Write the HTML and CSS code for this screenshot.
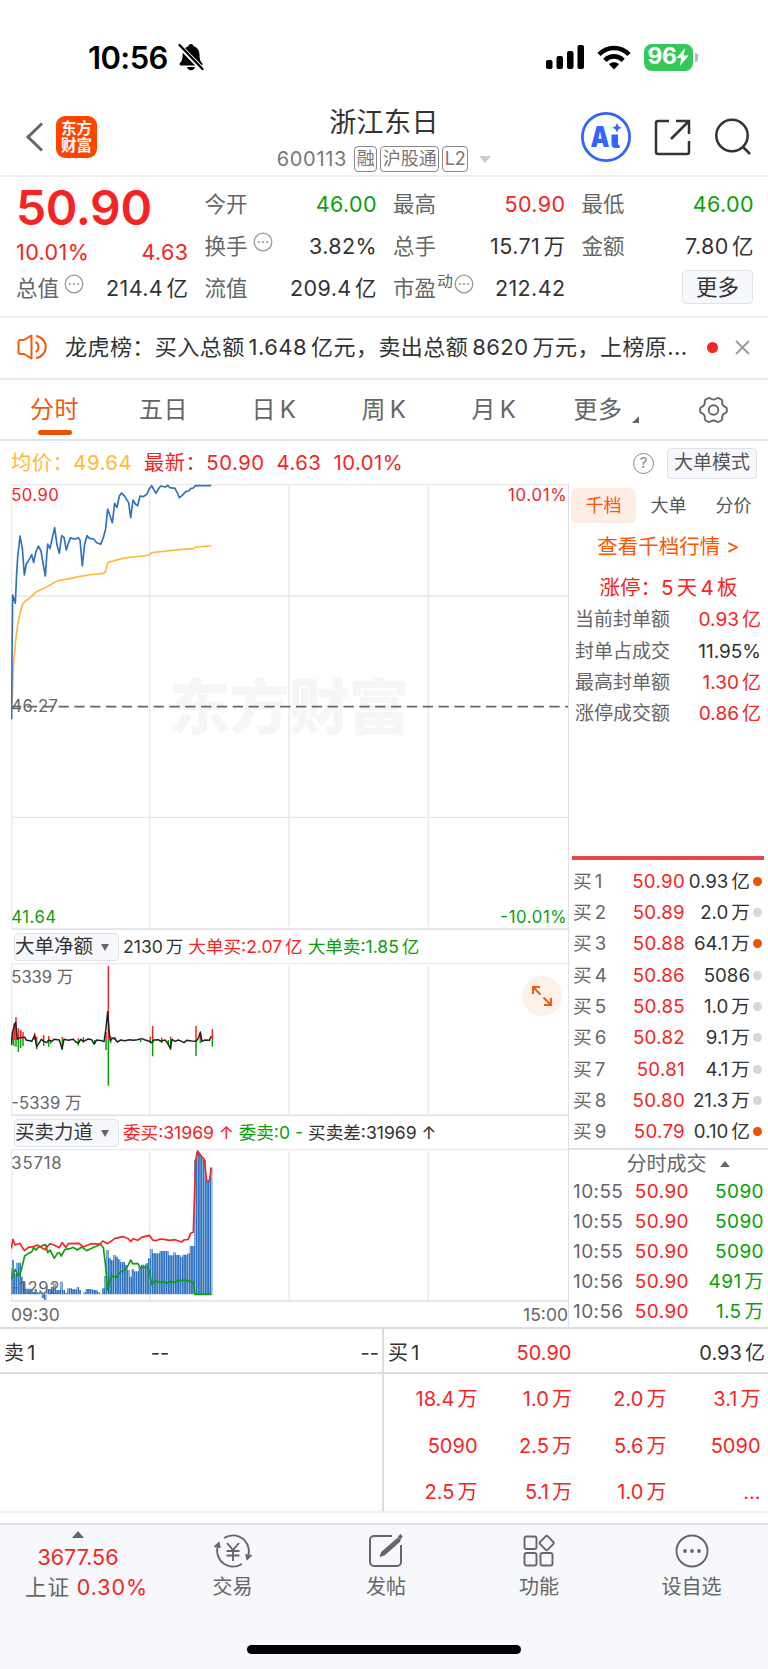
FILE: index.html
```html
<!DOCTYPE html>
<html lang="zh-CN">
<head>
  <meta charset="UTF-8">
  <meta name="viewport" content="width=device-width, initial-scale=1.0">
  <title>浙江东日 600113</title>
  <link rel="stylesheet" href="styles.css">
</head>
<body>
  <div class="status-bar">
    <span class="clock">10:56</span>
    <svg class="bell" width="26" height="28" viewBox="0 0 26 28">
      <path d="M13 1c1.500 0 2.500 1 2.600 2.200 4 1.200 5.900 4.600 5.900 8.300 0 5.500 1.200 7 2.800 8.800.8 1-.1 2.200-1.200 2.200H3c-1.200 0-1.900-1.200-1.200-2.200 1.700-1.900 2.800-3.300 2.800-8.800 0-3.700 1.900-7.100 5.800-8.300C10.500 2 11.500 1 13 1zM9 24h8c-.5 2-2 3.300-4 3.300S9.500 26 9 24z"/>
      <path d="M1 2.500l23.500 24" stroke="#fff" stroke-width="5"/>
      <path d="M1.500 2l23 24" stroke="#000" stroke-width="2.200" stroke-linecap="round"/>
    </svg>
    <svg class="signal" width="39" height="25" viewBox="0 0 39 25">
      <rect x="0" y="15" width="6.500" height="9" rx="2"/>
      <rect x="10.500" y="11" width="6.500" height="13" rx="2"/>
      <rect x="21" y="6" width="6.500" height="18" rx="2"/>
      <rect x="31.500" y="0" width="6.500" height="24" rx="2"/>
    </svg>
    <svg class="wifi" width="34" height="25" viewBox="0 0 34 25" fill="none" stroke="#000" stroke-width="4.600">
      <path d="M2 9.500C10.500 .8 23.500 .8 32 9.500"/>
      <path d="M7.800 15.300c5.300-5.200 13.100-5.200 18.400 0"/>
      <path d="M17 24.500l-5-5.200c3-2.600 7-2.600 10 0z" fill="#000" stroke="none"/>
    </svg>
    <div class="battery"><span>96</span><svg width="13" height="18" viewBox="0 0 13 18"><path d="M9 0L.5 10h4.700L3.800 18 12.600 7.500H7.700z" fill="#fff"/></svg></div>
    <i class="battery-tip"></i>
  </div>

  <div class="header">
    <div class="header-left">
      <svg width="20" height="30" viewBox="0 0 20 30" fill="none" stroke="#666" stroke-width="3"><path d="M17 1.500L3 15l14 13.500"/></svg>
      <div class="logo">东方<br>财富</div>
    </div>
    <div class="header-title">
      <div class="name">浙江东日</div>
      <div class="code">
        <span class="num">600113</span>
        <span class="tag">融</span><span class="tag">沪股通</span><span class="tag">L2</span>
        <i class="caret"></i>
      </div>
    </div>
    <div class="header-right">
      <svg width="50" height="50" viewBox="0 0 50 50">
        <circle cx="25" cy="25" r="23.600" fill="none" stroke="#3464ff" stroke-width="2.800"/>
        <text class="ai-text" x="9.500" y="35" textLength="19" lengthAdjust="spacingAndGlyphs">A</text>
        <path d="M30.500 22.500h6.500V31c0 1.700.3 2 1.700 2.200V36h-4c-3 0-4.200-1.500-4.200-4.300z" fill="#3464ff"/>
        <path d="M36 11l1.500 3.200 3.200 1.500-3.200 1.500L36 20.400l-1.500-3.200-3.200-1.500 3.200-1.500z" fill="#3464ff"/>
      </svg>
      <svg width="37" height="37" viewBox="0 0 37 37" fill="none" stroke="#333" stroke-width="2.500">
        <path d="M15 2H4a2 2 0 0 0-2 2v29a2 2 0 0 0 2 2h29a2 2 0 0 0 2-2V22"/>
        <path d="M22 2h13v13M35 2L17 20"/>
      </svg>
      <svg width="38" height="38" viewBox="0 0 38 38" fill="none" stroke="#333" stroke-width="2.500">
        <circle cx="18" cy="17.500" r="15.700"/><path d="M29 29l7 7"/>
      </svg>
    </div>
  </div>

  <div class="quote">
    <div class="quote-main">
      <div class="price red">50.90</div>
      <div class="cell red"><span>10.01%</span><span>4.63</span></div>
      <div class="cell"><label>总值<svg class="dots"><use href="#dots"/></svg></label><span>214.4<u>亿</u></span></div>
    </div>
    <div class="quote-col">
      <div class="cell"><label>今开</label><span class="green">46.00</span></div>
      <div class="cell"><label>换手<svg class="dots"><use href="#dots"/></svg></label><span>3.82%</span></div>
      <div class="cell"><label>流值</label><span>209.4<u>亿</u></span></div>
    </div>
    <div class="quote-col">
      <div class="cell"><label>最高</label><span class="red">50.90</span></div>
      <div class="cell"><label>总手</label><span>15.71<u>万</u></span></div>
      <div class="cell"><label>市盈<small>动</small><svg class="dots tight"><use href="#dots"/></svg></label><span>212.42</span></div>
    </div>
    <div class="quote-col">
      <div class="cell"><label>最低</label><span class="green">46.00</span></div>
      <div class="cell"><label>金额</label><span>7.80<u>亿</u></span></div>
      <div class="cell right"><div class="more-btn">更多</div></div>
    </div>
  </div>

  <div class="news">
    <svg width="31" height="26" viewBox="0 0 31 26" fill="none" stroke="#f25a0c" stroke-width="2">
      <path d="M14.500 1.500v23L7 20H3.500A2 2 0 0 1 1.500 18V8a2 2 0 0 1 2-2H7z" stroke-linejoin="round"/>
      <path d="M18.500 8c4 1.500 4 8.500 0 10M19 2c13 2 13 20 0 22"/>
    </svg>
    <div class="news-text">龙虎榜：买入总额<b>1.648</b>亿元，卖出总额<b>8620</b>万元，上榜原...</div>
    <i class="red-dot"></i>
    <svg width="15" height="15" viewBox="0 0 15 15" stroke="#999" stroke-width="1.800"><path d="M1 1l13 13M14 1L1 14"/></svg>
  </div>

  <div class="tabs">
    <div class="tab active">分时</div>
    <div class="tab">五日</div>
    <div class="tab">日<u>K</u></div>
    <div class="tab">周<u>K</u></div>
    <div class="tab">月<u>K</u></div>
    <div class="tab more">更多<i class="corner"></i></div>
    <div class="tab">
      <svg width="29" height="28" viewBox="0 0 29 28" fill="none" stroke="#666" stroke-width="1.900">
        <path d="M9 2.200C11 1 11.500 3.500 14.500 3.500S18 1 20 2.200l2.600 1.600c1.500 1.400-.2 3 1.200 5.200s4 1.500 4 3.500v3c0 2-2.600 1.300-4 3.500s.3 3.800-1.200 5.200L20 25.800c-2 1.200-2.500-1.300-5.500-1.300S11 27 9 25.800l-2.600-1.600c-1.500-1.400.2-3-1.200-5.200s-4-1.500-4-3.500v-3c0-2 2.600-1.300 4-3.500S4.900 5.200 6.400 3.800z"/>
        <circle cx="14.500" cy="14" r="4.800"/>
      </svg>
    </div>
  </div>

  <div class="legend">
    <span class="avg">均价：49.64</span>
    <span class="red">最新：50.90</span>
    <span class="red">4.63</span>
    <span class="red">10.01%</span>
    <i class="help">?</i>
    <div class="mode-btn">大单模式</div>
  </div>

  <div class="main">
    <div class="charts">
      <svg class="chart price-chart" viewBox="33 42 1671 1338">
        <path class="grid" d="M449 46V1370M867 46V1370M1285 46V1370M33 378H1704M33 1042H1704"/>
        <path class="frame" d="M35 1376V44H1704"/>
        <path class="frame-bottom" d="M33 1377H1704"/>
        <text class="watermark" x="508" y="776" textLength="720">东方财富</text>
        <path class="zero" d="M33 710H1704"/>
        <polyline class="avg-line" points="36,700 40,590 46,520 53,465 60,430 67,405 75,394 92,382 107,367 120,360 135,353 150,345 165,336 180,331 210,326 240,319 265,315 310,310 317,304 323,278 345,271 370,265 395,261 430,258 448,255 455,248 500,243 540,239 580,236 588,231 634,228"/>
        <polyline class="price-line" points="35,748 36,560 38,375 42,388 46,400 50,310 53,262 60,198 67,235 73,315 79,282 88,268 95,254 101,278 107,248 115,228 123,243 130,285 136,318 140,260 143,222 150,236 157,203 164,173 171,225 178,250 185,197 192,202 199,240 205,220 212,203 219,206 227,207 234,203 240,210 247,288 254,222 261,197 268,205 281,207 290,218 302,223 310,203 317,176 323,117 330,137 337,158 344,100 351,113 358,78 365,69 374,79 386,98 392,143 399,90 406,102 413,107 420,78 430,80 441,72 448,56 455,47 462,60 468,70 475,57 482,48 496,51 503,46 510,53 525,55 532,69 538,83 546,77 558,64 566,63 573,55 580,54 586,47 634,47"/>
        <text class="c-red" x="34" y="93" textLength="142">50.90</text>
        <text class="c-red" x="1524" y="93" textLength="176">10.01%</text>
        <text x="34" y="725" textLength="140">46.27</text>
        <text class="c-green" x="34" y="1358" textLength="134">41.64</text>
        <text class="c-green" x="1501" y="1358" textLength="199">-10.01%</text>
      </svg>

      <div class="sub-head">
        <div class="select">大单净额<i></i></div>
        <span>2130<u>万</u></span>
        <span class="red">大单买:2.07<u>亿</u></span>
        <span class="green">大单卖:1.85<u>亿</u></span>
      </div>
      <div class="chart-wrap">
        <svg class="chart sub-chart" viewBox="33 189 1671 459">
          <path class="grid" d="M449 198V643M867 198V643M1285 198V643"/>
          <path class="frame" d="M35 646V191H1704"/>
          <path class="frame-bottom" d="M33 646H1704"/>
          <path class="bar-red" d="M38 420V395M43 420V370M48 420V352M55 420V385M62 420V390M69 420V396M104 420V398M110 420V410M131 420V405M146 420V408M187 420V411M235 420V415M250 420V412M318 420V395M325 420V198M332 420V408M345 420V410M451 420V410M458 420V378M485 420V413M512 420V410M588 420V378M601 420V400M637 420V388"/>
          <path class="bar-green" d="M35 420V434M41 420V438M48 420V440M55 420V456M62 420V444M69 420V438M110 420V448M131 420V438M146 420V440M152 420V431M187 420V450M235 420V437M250 420V428M284 420V433M318 420V450M325 420V557M332 420V430M422 420V427M451 420V430M458 420V469M485 420V430M505 420V436M512 420V450M588 420V468M601 420V430M637 420V440"/>
          <polyline class="net-line" points="34,435 37,400 43,375 47,367 52,418 58,413 75,412 78,420 95,424 104,406 110,440 118,428 124,418 132,424 140,428 146,420 155,424 162,418 178,420 186,446 192,418 205,421 220,418 228,426 235,430 242,418 250,424 265,417 275,419 282,432 290,420 305,422 312,425 318,385 323,335 328,400 331,422 338,414 345,417 352,426 362,420 375,422 388,419 400,421 412,419 425,416 436,420 448,424 455,428 462,420 475,419 482,424 495,420 502,428 511,445 516,418 525,424 535,420 545,424 552,428 560,421 575,423 588,424 595,415 601,396 606,424 615,420 628,421 634,408"/>
          <text x="34" y="249" textLength="186">5339 万</text>
          <text x="34" y="626" textLength="211">-5339 万</text>
        </svg>
        <div class="expand">
          <svg width="22" height="22" viewBox="0 0 22 22" fill="none" stroke="#f25a0c" stroke-width="2">
            <path d="M2 9V2h7M2 2l7.500 7.500M20 13v7h-7M20 20l-7.500-7.500"/>
          </svg>
        </div>
      </div>

      <div class="sub-head">
        <div class="select">买卖力道<i></i></div>
        <span class="red">委买:31969 ↑</span>
        <span class="green">委卖:0 -</span>
        <span>买卖差:31969 ↑</span>
      </div>
      <svg class="chart sub-chart" viewBox="33 117 1671 459">
        <defs>
          <pattern id="bars" x="33" y="0" width="6.930" height="600" patternUnits="userSpaceOnUse">
            <rect width="6.930" height="600" fill="#a9c8ea"/>
            <rect width="4.800" height="600" fill="#2f71c0"/>
          </pattern>
        </defs>
        <path class="grid" d="M449 125V570M867 125V570M1285 125V570"/>
        <path class="frame" d="M35 573V119H1704"/>
        <path class="frame-bottom" d="M33 573H1704"/>
        <path fill="url(#bars)" d="M34 553V475H36V450H42V490H49V458H63V500H69V520H76V536H97V545H104V537H111V547H125V565H132V570H139V537H153V530H160V520H167V540H181V515H188V540H195V548H202V535H216V538H230V531H237V540H243V553H250V547H257V537H278V540H292V545H299V551H306V535H313V498H319V420H326V445H333V450H340V435H347V440H354V448H361V456H375V465H382V480H389V500H395V478H402V484H416V470H423V464H437V460H444V445H451V417H458V430H472V430H479V423H506V436H520V427H527V435H541V440H548V434H562V430H569V408H583V150H589V126H596V132H603V142H610V150H617V213H630V175H637V553z"/>
        <polyline class="sell-line" points="34,508 40,490 46,478 54,498 60,494 67,467 74,438 85,430 95,426 101,413 108,420 115,412 123,409 130,406 137,404 143,428 150,420 163,445 172,430 178,428 184,438 195,418 210,416 220,412 232,420 245,411 260,422 270,417 302,403 310,413 316,460 323,540 330,508 337,498 350,502 363,485 379,477 392,450 399,462 413,460 420,472 440,472 448,482 455,524 462,516 470,512 480,518 490,515 500,520 512,514 522,518 535,511 560,511 580,517 585,553 635,553"/>
        <polyline class="buy-line" points="34,416 39,388 45,405 60,400 73,422 85,412 100,410 112,405 125,413 136,419 143,408 150,401 162,405 178,413 186,398 198,412 205,401 237,400 250,411 262,406 273,401 300,402 308,393 323,401 345,385 370,380 385,386 392,395 399,386 413,391 425,382 448,376 458,390 468,392 480,387 492,388 508,391 525,389 545,396 552,390 565,388 572,370 580,367 587,150 593,123 605,140 613,148 620,213 628,213 634,172"/>
        <text x="34" y="176" textLength="151">35718</text>
        <text x="34" y="553" textLength="145">-1292</text>
      </svg>
      <div class="time-axis"><span>09:30</span><span>15:00</span></div>
    </div>

    <div class="side">
      <div class="side-tabs"><span class="on">千档</span><span>大单</span><span>分价</span></div>
      <div class="side-link">查看千档行情 &gt;</div>
      <div class="limit">涨停：5<u>天</u><u>4</u><u>板</u></div>
      <div class="stat"><label>当前封单额</label><span class="red">0.93<u>亿</u></span></div>
      <div class="stat"><label>封单占成交</label><span>11.95%</span></div>
      <div class="stat"><label>最高封单额</label><span class="red">1.30<u>亿</u></span></div>
      <div class="stat"><label>涨停成交额</label><span class="red">0.86<u>亿</u></span></div>
      <div class="book">
        <div class="row"><label>买<u>1</u></label><span class="red">50.90</span><span>0.93<u>亿</u></span><i class="hot"></i></div>
        <div class="row"><label>买<u>2</u></label><span class="red">50.89</span><span>2.0<u>万</u></span><i></i></div>
        <div class="row"><label>买<u>3</u></label><span class="red">50.88</span><span>64.1<u>万</u></span><i class="hot"></i></div>
        <div class="row"><label>买<u>4</u></label><span class="red">50.86</span><span>5086</span><i></i></div>
        <div class="row"><label>买<u>5</u></label><span class="red">50.85</span><span>1.0<u>万</u></span><i></i></div>
        <div class="row"><label>买<u>6</u></label><span class="red">50.82</span><span>9.1<u>万</u></span><i></i></div>
        <div class="row"><label>买<u>7</u></label><span class="red">50.81</span><span>4.1<u>万</u></span><i></i></div>
        <div class="row"><label>买<u>8</u></label><span class="red">50.80</span><span>21.3<u>万</u></span><i></i></div>
        <div class="row"><label>买<u>9</u></label><span class="red">50.79</span><span>0.10<u>亿</u></span><i class="hot"></i></div>
      </div>
      <div class="deals">
        <div class="deals-head">分时成交<i></i></div>
        <div class="deal"><label>10:55</label><span class="red">50.90</span><span class="green">5090</span></div>
        <div class="deal"><label>10:55</label><span class="red">50.90</span><span class="green">5090</span></div>
        <div class="deal"><label>10:55</label><span class="red">50.90</span><span class="green">5090</span></div>
        <div class="deal"><label>10:56</label><span class="red">50.90</span><span class="green">491<u>万</u></span></div>
        <div class="deal"><label>10:56</label><span class="red">50.90</span><span class="green">1.5<u>万</u></span></div>
      </div>
    </div>
  </div>

  <div class="queue">
    <div class="queue-side sell">
      <div class="queue-head"><span>卖<u>1</u></span><span>--</span><span>--</span></div>
    </div>
    <div class="queue-side">
      <div class="queue-head"><span>买<u>1</u></span><span class="red">50.90</span><span>0.93<u>亿</u></span></div>
      <div class="queue-grid red">
        <span>18.4<u>万</u></span><span>1.0<u>万</u></span><span>2.0<u>万</u></span><span>3.1<u>万</u></span>
        <span>5090</span><span>2.5<u>万</u></span><span>5.6<u>万</u></span><span>5090</span>
        <span>2.5<u>万</u></span><span>5.1<u>万</u></span><span>1.0<u>万</u></span><span>...</span>
      </div>
    </div>
  </div>

  <div class="bottom">
    <div class="nav">
      <div class="index">
        <i></i>
        <div class="red">3677.56</div>
        <div class="change">上证 <span class="red">0.30%</span></div>
      </div>
      <div class="nav-item">
        <svg width="38" height="34" viewBox="0 0 38 34" fill="none" stroke="#666" stroke-width="1.900">
          <path d="M10 4C20-2 32 3 34.500 14c.7 3.500.3 7-1 10M37.500 21l-4.300 4-1-5"/>
          <path d="M28 30C18 36 6 31 3.500 20c-.7-3.500-.3-7 1-10M.500 13l4.300-4 1 5"/>
          <path d="M13 9l6 7 6-7M12.500 17h13M12.500 21.500h13M19 16v11"/>
        </svg>
        交易
      </div>
      <div class="nav-item">
        <svg width="34" height="34" viewBox="0 0 34 34" fill="none" stroke="#666" stroke-width="2">
          <path d="M23 2H5a4 4 0 0 0-4 4v22a4 4 0 0 0 4 4h23a4 4 0 0 0 4-4V11"/>
          <path d="M28.500 5l2 2L15 20.500l-3 1 1-3zM30 3l1.500-1.500 1 1L31 4.500z" fill="#666"/>
        </svg>
        发帖
      </div>
      <div class="nav-item">
        <svg width="32" height="34" viewBox="0 0 32 34" fill="none" stroke="#666" stroke-width="1.900">
          <rect x="1.500" y="2.500" width="12" height="12.500" rx="2"/>
          <rect x="1.500" y="19" width="12" height="12.500" rx="2"/>
          <rect x="17.500" y="19" width="12" height="12.500" rx="2"/>
          <path d="M22.600 2.400q1.100-1.100 2.200 0l5.400 5.500q1 1.100 0 2.200l-5.400 5.500q-1.100 1.100-2.200 0l-5.400-5.500q-1-1.100 0-2.200z"/>
        </svg>
        功能
      </div>
      <div class="nav-item">
        <svg width="34" height="34" viewBox="0 0 34 34">
          <circle cx="17" cy="17" r="15.500" fill="none" stroke="#666" stroke-width="1.900"/>
          <g fill="#666"><circle cx="10" cy="17" r="1.900"/><circle cx="17" cy="17" r="1.900"/><circle cx="24" cy="17" r="1.900"/></g>
        </svg>
        设自选
      </div>
    </div>
    <div class="home-bar"></div>
  </div>

  <svg class="defs">
    <symbol id="dots" viewBox="0 0 20 20">
      <circle cx="10" cy="10" r="8.800" fill="none" stroke="#999" stroke-width="1.300"/>
      <g fill="#999"><circle cx="5.800" cy="10" r="1.100"/><circle cx="10" cy="10" r="1.100"/><circle cx="14.200" cy="10" r="1.100"/></g>
    </symbol>
  </svg>
</body>
</html>
```

FILE: styles.css
```css
* {
  box-sizing: border-box;
}

body {
  margin: 0;
  width: 768px;
  height: 1669px;
  overflow: hidden;
  background: #fff;
  color: #333;
  font-family: Inter, 'Noto Sans CJK SC', sans-serif;
  font-size: 21.5px;
  line-height: 1.2;
  white-space: nowrap;
}

svg {
  display: block;
  flex: none;
}

i, b {
  font-style: normal;
  font-weight: 400;
}

/* small gap between digits and CJK units */
u {
  text-decoration: none;
  margin-left: 0.16em;
}

label {
  color: #666;
}

.red {
  color: #f52424;
}

.green {
  color: #0aa00a;
}

.defs {
  position: absolute;
  width: 0;
  height: 0;
}

/* status bar */
.status-bar {
  height: 100px;
  padding: 14px 0 0 88px;
  display: flex;
  align-items: center;
}

.clock {
  width: 90px;
  padding-top: 2px;
  font-size: 31px;
  font-weight: 600;
  letter-spacing: -0.6px;
  color: #000;
}

.signal {
  margin-left: 342px;
}

.wifi {
  margin-left: 12px;
}

.battery {
  width: 49px;
  height: 27px;
  margin-left: 13px;
  border-radius: 8px;
  background: #34c759;
  display: flex;
  align-items: center;
  justify-content: center;
  color: #fff;
  font-size: 23px;
  font-weight: 700;
  letter-spacing: -0.5px;
}

.battery-tip {
  width: 3px;
  height: 9px;
  margin-left: 2px;
  border-radius: 0 3px 3px 0;
  background: #b5b5b5;
}

/* header */
.header {
  height: 77px;
  border-bottom: 2px solid #eee;
  display: flex;
  justify-content: space-between;
}

.header-left {
  width: 231px;
  padding: 0 0 1px 25px;
  display: flex;
  align-items: center;
  gap: 11px;
}

.logo {
  width: 41px;
  height: 42px;
  border-radius: 9px;
  background: #ff4400;
  color: #fff;
  font-size: 15.5px;
  font-weight: 700;
  line-height: 17px;
  text-align: center;
  padding-top: 4px;
}

.header-title {
  text-align: center;
}

.name {
  height: 45px;
  line-height: 46px;
  font-size: 27px;
  letter-spacing: 0.4px;
}

.code {
  height: 28px;
  display: flex;
  align-items: center;
  gap: 3px;
  color: #777;
  font-size: 20px;
}

.code .num {
  margin-right: 4px;
  letter-spacing: 0.7px;
}

.tag {
  height: 26px;
  padding: 0 1.5px;
  border: 1.5px solid #888;
  border-radius: 4px;
  font-size: 18px;
  line-height: 23px;
}

.caret {
  margin-left: 8px;
  border: 6px solid transparent;
  border-top: 7px solid #ccc;
  border-bottom: 0;
}

.header-right {
  width: 231px;
  padding: 0 16px 1px 0;
  display: flex;
  align-items: center;
  justify-content: flex-end;
  gap: 23px;
}

.ai-text {
  font-size: 29px;
  font-weight: 900;
  fill: #3464ff;
}

/* quote */
.quote {
  height: 141px;
  padding: 7px 15px 0 16px;
  border-bottom: 2px solid #eee;
  display: grid;
  grid-template-columns: repeat(4, 1fr);
  gap: 17px;
}

.cell {
  height: 42px;
  display: flex;
  align-items: center;
  justify-content: space-between;
}

.cell span {
  letter-spacing: 0.4px;
}

.cell span:last-child {
  margin-right: -1px;
}

.cell label {
  display: flex;
  align-items: center;
}

.cell small {
  font-size: 16px;
  margin-bottom: 14px;
  margin-left: 1px;
}

.right {
  justify-content: flex-end;
}

.dots {
  width: 20px;
  height: 20px;
  margin: 0 0 10px 5px;
}

.tight {
  margin-left: 1px;
}

.price {
  height: 53px;
  line-height: 48px;
  font-size: 48px;
  font-weight: 600;
  letter-spacing: -0.4px;
}

.quote-main .cell {
  height: 31px;
}

.quote-main .cell + .cell {
  height: 42px;
}

.more-btn {
  width: 71px;
  height: 34px;
  margin-bottom: 5px;
  border: 1.5px solid #e0e2ea;
  border-radius: 4px;
  background: #f7f8fb;
  line-height: 32px;
  text-align: center;
}

/* news */
.news {
  height: 62px;
  padding: 0 18px 2px 17px;
  border-bottom: 2px solid #ebebee;
  display: flex;
  align-items: center;
}

.news-text {
  width: 630px;
  margin-left: 17px;
  font-size: 22px;
  letter-spacing: 0.45px;
}

.news-text b {
  margin: 0 4px;
}

.red-dot {
  width: 11px;
  height: 11px;
  margin: 0 17px 0 auto;
  border-radius: 50%;
  background: #f52424;
}

/* period tabs */
.tabs {
  height: 61px;
  border-bottom: 2px solid #e2e3ea;
  display: grid;
  grid-template-columns: 109px 109px 112px 108px 112px 108px 110px;
}

.tab {
  position: relative;
  padding-top: 1px;
  display: flex;
  align-items: center;
  justify-content: center;
  color: #666;
  font-size: 24px;
  letter-spacing: 0.5px;
}

.tab.active {
  color: #f25a0c;
}

.active::after {
  content: '';
  position: absolute;
  left: 38px;
  bottom: 4px;
  width: 34px;
  height: 5px;
  border-radius: 3px;
  background: #eb5300;
}

.tab.more {
  padding-left: 4px;
}

.corner {
  margin: 18px 0 0 9px;
  border-left: 7px solid transparent;
  border-bottom: 7px solid #666;
}

/* legend above chart */
.legend {
  height: 43px;
  padding: 1px 11px 0 11px;
  display: flex;
  align-items: center;
  gap: 12px;
  font-size: 20.3px;
  letter-spacing: 0.5px;
}

.avg {
  color: #ffb83d;
}

.help {
  width: 21px;
  height: 21px;
  margin: 0 1px 0 auto;
  border: 1.5px solid #888;
  border-radius: 50%;
  color: #888;
  font-size: 15px;
  line-height: 18px;
  letter-spacing: 0;
  text-align: center;
}

.mode-btn {
  width: 90px;
  height: 31px;
  border: 1.5px solid #e0e2ea;
  border-radius: 4px;
  background: #f7f8fb;
  color: #555;
  font-size: 19px;
  line-height: 28px;
  letter-spacing: 0;
  text-align: center;
}

/* charts */
.main {
  height: 845px;
  padding-left: 11px;
  border-bottom: 2px solid #dcdee5;
  display: flex;
}

.charts {
  width: 557px;
}

.chart {
  width: 557px;
}

.price-chart {
  height: 446px;
}

.sub-chart {
  height: 153px;
}

.chart text {
  font-size: 50px;
  fill: #666;
}

.chart .c-red {
  fill: #f52424;
}

.chart .c-green {
  fill: #0aa00a;
}

.chart .watermark {
  font-size: 182px;
  font-weight: 900;
  fill: #f6f6f6;
}

.grid {
  stroke: #e6e7ef;
  stroke-width: 4;
}

.frame {
  fill: none;
  stroke: #ebebee;
  stroke-width: 4;
}

.frame-bottom {
  stroke: #dfe0e7;
  stroke-width: 5;
}

.zero {
  stroke: #666;
  stroke-width: 5;
  stroke-dasharray: 31 16.500;
}

polyline {
  fill: none;
  stroke-linejoin: round;
  stroke-width: 5;
}

.price-line {
  stroke: #2f71c0;
}

.avg-line {
  stroke: #ffb83d;
}

.net-line {
  stroke: #222;
  stroke-width: 4.5;
}

.buy-line {
  stroke: #f52424;
}

.sell-line {
  stroke: #0aa00a;
}

.bar-red {
  stroke: #f52424;
  stroke-width: 4.5;
}

.bar-green {
  stroke: #0aa00a;
  stroke-width: 4.5;
}

.sub-head {
  height: 33px;
  padding: 1px 0 0 3px;
  display: flex;
  align-items: center;
  gap: 5px;
  font-size: 17.6px;
}

.select {
  width: 105px;
  height: 28px;
  margin-right: -1px;
  border: 1.5px solid #e0e2ea;
  border-radius: 4px;
  background: #f7f8fb;
  display: flex;
  align-items: center;
  font-size: 19.5px;
}

.select i {
  margin-left: 8px;
  border: 4px solid transparent;
  border-top: 7px solid #666;
  border-bottom: 0;
}

.chart-wrap {
  position: relative;
}

.expand {
  position: absolute;
  top: 13px;
  right: 6px;
  width: 40px;
  height: 40px;
  border-radius: 50%;
  background: #fef1ea;
  display: flex;
  align-items: center;
  justify-content: center;
}

.time-axis {
  height: 25px;
  display: flex;
  align-items: center;
  justify-content: space-between;
  color: #666;
  font-size: 17.5px;
}

/* side panel */
.side {
  width: 200px;
  border-left: 1px solid #dfe0e7;
  font-size: 19px;
}

.side-tabs {
  height: 35px;
  margin: 4px 0 0 2px;
  display: flex;
  font-size: 18px;
  line-height: 35px;
  color: #555;
}

.side-tabs span {
  width: 65px;
  text-align: center;
}

.side-tabs .on {
  border-radius: 6px;
  background: #ffece4;
  color: #ff5500;
}

.side-link {
  height: 46px;
  line-height: 47px;
  text-align: center;
  font-size: 20.5px;
  color: #ff5500;
}

.limit {
  height: 36px;
  line-height: 37px;
  text-align: center;
  font-size: 20.5px;
  color: #f52424;
}

.stat {
  height: 31.4px;
  padding: 0 7px 0 6px;
  display: flex;
  align-items: center;
  justify-content: space-between;
}

.book {
  height: 294px;
  margin-top: 125px;
  border-bottom: 2px solid #dfe0e7;
}

.book::before {
  content: '';
  display: block;
  height: 4px;
  margin: 0 4px 6.5px 3px;
  background: #e8474a;
}

.row {
  height: 31.35px;
  padding-left: 4px;
  display: grid;
  grid-template-columns: 45px 67px 65px 16px;
  align-items: center;
  font-size: 18.7px;
}

.row span {
  text-align: right;
}

.row .red {
  letter-spacing: 0.3px;
}

.row i {
  width: 9px;
  height: 9px;
  margin: 0 0 1px 3px;
  border-radius: 50%;
  background: #d5d7de;
}

.row .hot {
  background: #eb5300;
}

.deals-head {
  height: 28px;
  padding-left: 19px;
  display: flex;
  align-items: center;
  justify-content: center;
  color: #666;
  font-size: 20px;
}

.deals-head i {
  margin-left: 13px;
  border: 5px solid transparent;
  border-bottom: 6px solid #666;
  border-top: 0;
}

.deal {
  height: 30px;
  padding-left: 4px;
  display: grid;
  grid-template-columns: 50px 66px 75px;
  align-items: center;
  letter-spacing: 0.4px;
}

.deal span {
  text-align: right;
}

/* level 2 queue */
.queue {
  height: 184px;
  border-bottom: 2px solid #f0f0f3;
  display: flex;
  font-size: 20px;
}

.queue-side {
  width: 384px;
}

.sell {
  border-right: 2px solid #d9dce2;
}

.queue-head {
  height: 45px;
  padding: 4px 3px 0 4px;
  border-bottom: 2px solid #d9dce2;
  display: grid;
  grid-template-columns: 112px 88px 1fr;
  align-items: center;
}

.queue-head span:nth-child(2) {
  text-align: center;
}

.queue-head span:nth-child(3) {
  text-align: right;
}

.queue-grid {
  padding-top: 2px;
  display: grid;
  grid-template-columns: 93.5px 94.5px 94.5px 94px;
  grid-auto-rows: 46.5px;
  align-items: center;
  text-align: right;
}

/* bottom navigation */
.bottom {
  height: 146px;
  margin-top: 10px;
  border-top: 2px solid #e0e2ea;
  background: #f7f8fb;
  color: #666;
}

.nav {
  height: 120px;
  display: grid;
  grid-template-columns: 156px 153px 154px 152px 153px;
  text-align: center;
}

.index {
  line-height: 30px;
  padding-top: 6px;
  font-size: 21.5px;
}

.index i {
  display: block;
  width: 12px;
  margin: 0 auto 4px;
  border: 6px solid transparent;
  border-bottom: 7px solid #666;
  border-top: 0;
}

.change {
  padding-left: 17px;
  letter-spacing: 0.9px;
}

.nav-item {
  padding-top: 9px;
  display: flex;
  flex-direction: column;
  align-items: center;
  font-size: 20px;
  line-height: 39px;
}

.home-bar {
  width: 274px;
  height: 9px;
  margin: 0 auto;
  border-radius: 5px;
  background: #000;
}
```
